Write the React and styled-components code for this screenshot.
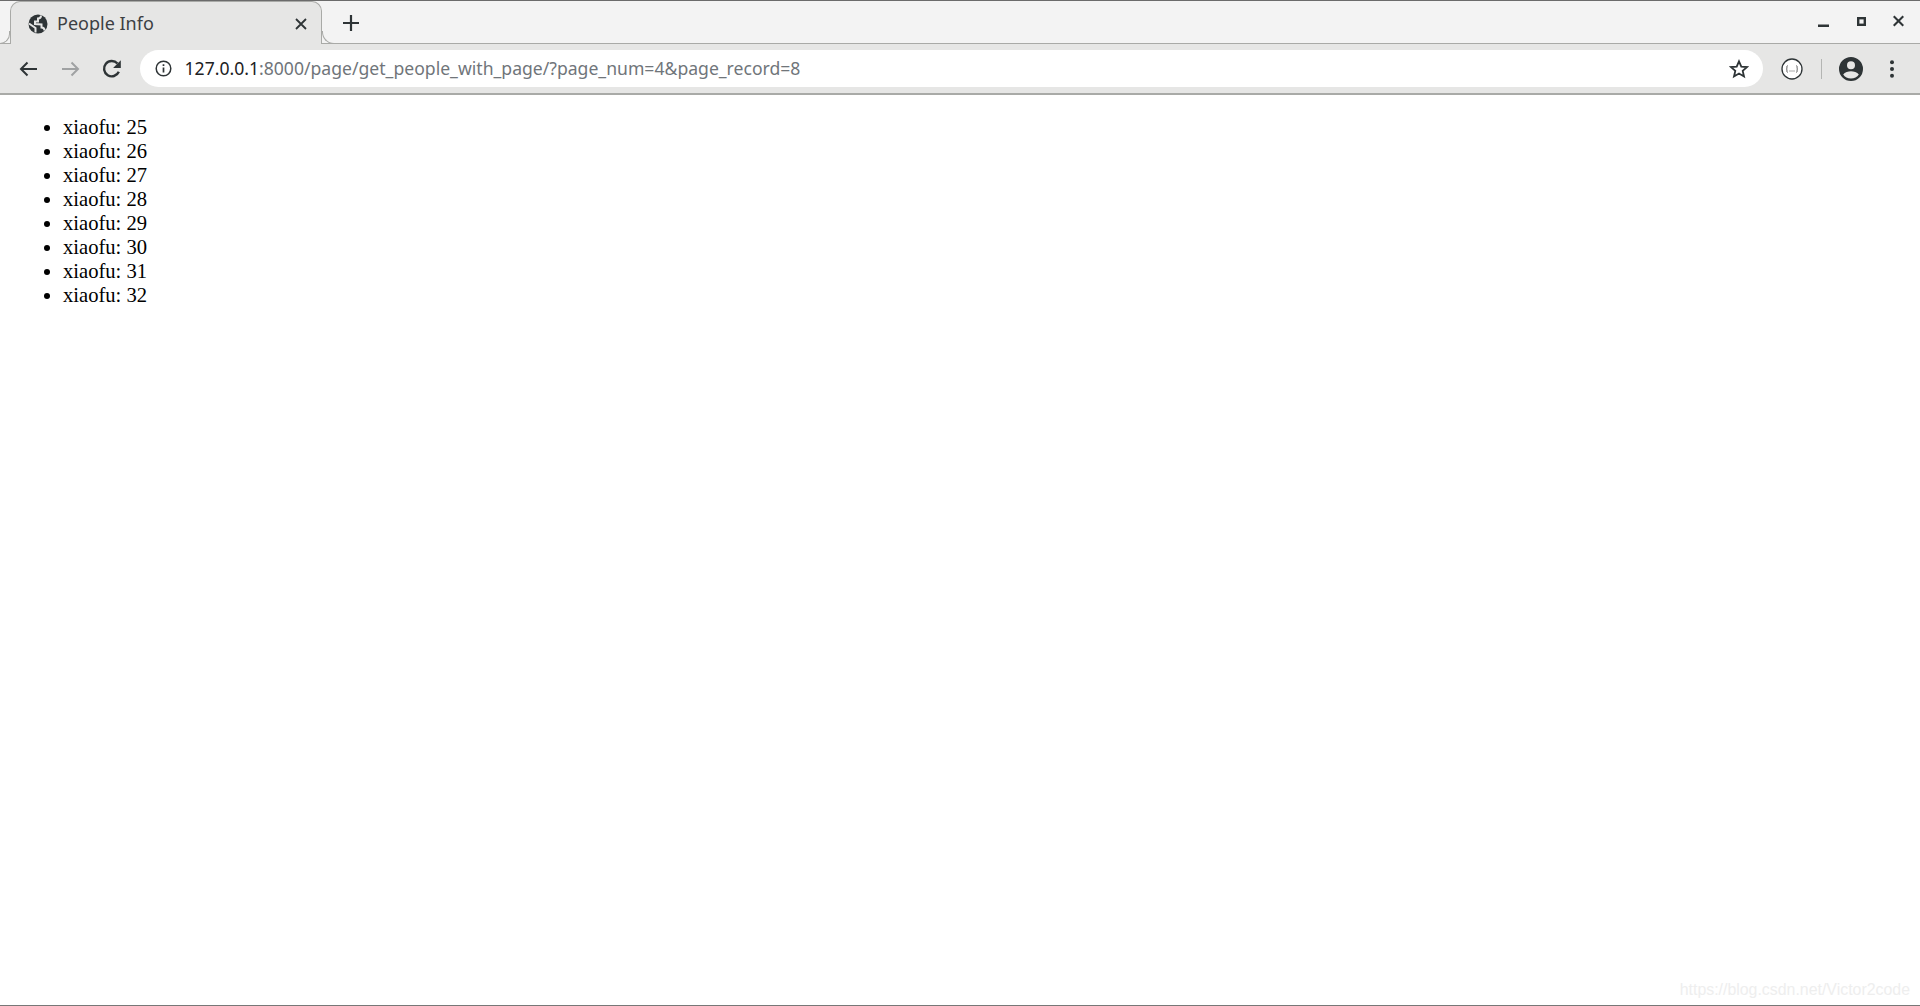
import React from "react";
import styled, { createGlobalStyle } from "styled-components";

const Global = createGlobalStyle`
  html, body { margin: 0; padding: 0; height: 100%; background: #fff; overflow: hidden; }
  #root { height: 100%; }
`;
const Window = styled.div`
  height: 1006px; display: flex; flex-direction: column; background: #fff;
  border-bottom: 1px solid #777; box-sizing: border-box; padding-bottom: 1px;
`;
const TabStrip = styled.div`
  height: 44px; flex: none; box-sizing: border-box; display: flex; align-items: flex-end;
  background: #f3f3f3; border-top: 1px solid #6b6b6b; border-bottom: 1px solid #a9aaa7;
  padding-left: 10px; color: #2e3436;
`;
const Tab = styled.div`
  position: relative; width: 312px; height: 43px; margin-bottom: -1px; box-sizing: border-box;
  display: flex; align-items: center; padding: 2px 13px 0 17px; gap: 9px;
  background: #e6e6e5; border: 1px solid #a9aaa7; border-bottom: none; border-radius: 10px 10px 0 0;
  &::before, &::after {
    content: ""; position: absolute; bottom: 0; height: 13px; box-sizing: border-box;
  }
  &::before { left: -11px; width: 10px; border-bottom: 1px solid #a9aaa7; border-right: 1px solid #a9aaa7; border-radius: 0 0 10px 0; }
  &::after { right: -14px; width: 13px; border-bottom: 1px solid #a9aaa7; border-left: 1px solid #a9aaa7; border-radius: 0 0 0 12px; }
`;
const TabTitle = styled.span`
  flex: 1; font: 18px "Noto Sans", sans-serif; color: #3c4043; position: relative; top: -1px;
`;
const NewTab = styled.div`
  margin: 0 0 0 21px; height: 43px; display: flex; align-items: center; padding-top: 3px; box-sizing: border-box;
`;
const WindowControls = styled.div`
  margin-left: auto; height: 43px; display: flex; align-items: center; gap: 27.5px; padding: 1px 16px 0 0; box-sizing: border-box;
`;
const Toolbar = styled.div`
  height: 51px; flex: none; box-sizing: border-box; display: flex; align-items: center;
  background: #e6e6e5; border-bottom: 2px solid #a9aaa7;
`;
const NavIcons = styled.div`
  width: 140px; flex: none; display: flex; align-items: center; padding-left: 15px; box-sizing: border-box; gap: 17px;
`;
const Omnibox = styled.div`
  flex: none; width: 1623px; height: 37px; border-radius: 19px; background: #fff; box-sizing: border-box;
  display: flex; align-items: center; padding: 0 14px 0 15px;
`;
const Url = styled.div`
  flex: 1; margin-left: 12.5px; padding-bottom: 1px; font: 17.6px "Noto Sans", sans-serif; color: #70757a; white-space: nowrap;
  b { font-weight: 400; color: #202124; }
`;
const RightIcons = styled.div`
  flex: 1; display: flex; align-items: center; padding-left: 18px;
`;
const Divider = styled.div`
  width: 1px; height: 20px; background: #b4b5b3; margin: 0 17px 0 18px;
`;
const Menu = styled.div`
  margin-left: 26px; display: flex; padding-top: 1px;
`;
const Page = styled.main`
  flex: 1; position: relative; background: #fff;
`;
const List = styled.ul`
  margin: 20px 0 0; padding: 0 0 0 63px; font: 20.6px/24px "Liberation Serif", serif; color: #000;
`;
const Watermark = styled.div`
  position: absolute; right: 10px; bottom: 5px; font: 15.9px "Liberation Sans", sans-serif; color: #eeeeee;
`;

const Globe = () => (
  <svg width="20" height="20" viewBox="0 0 20 20">
    <circle cx="10" cy="10" r="9.500" fill="#2e3436" />
    <path d="M1 9.500 7.500 14v4.500M16.500 16.500c0-2-1.500-3-3-3v-3l-6.500-.5V7.500h3V4.500c2 0 3-1 3-3" fill="none" stroke="#e6e6e5" strokeWidth="2" />
  </svg>
);
const Close = () => (
  <svg width="14" height="14" viewBox="0 0 14 14"><path d="M2 2l10 10M12 2L2 12" stroke="#2e3436" strokeWidth="1.800" /></svg>
);
const Plus = () => (
  <svg width="16" height="16" viewBox="0 0 16 16"><path d="M8 0v16M0 8h16" stroke="#2e3436" strokeWidth="2.200" /></svg>
);
const Minimize = () => (
  <svg width="11" height="16" viewBox="0 0 11 16"><rect x="0" y="10.500" width="11" height="2.500" fill="#2e3436" /></svg>
);
const Maximize = () => (
  <svg width="9" height="16" viewBox="0 0 9 16"><rect x="1.200" y="4.200" width="6.600" height="6.600" fill="none" stroke="#2e3436" strokeWidth="2.400" /></svg>
);
const WinClose = () => (
  <svg width="11" height="16" viewBox="0 0 11 16"><path d="M.7 2.200l9.600 9.600M10.300 2.200L.7 11.800" stroke="#2e3436" strokeWidth="2.200" /></svg>
);
const Arrow = ({ color, flip }) => (
  <svg width="26" height="26" viewBox="0 0 26 26" style={flip ? { transform: "scaleX(-1)" } : undefined}>
    <path d="M22 13H6M12.500 6.500 6 13l6.500 6.500" fill="none" stroke={color} strokeWidth="2" />
  </svg>
);
const Reload = () => (
  <svg width="22" height="22" viewBox="0 0 20 20">
    <path d="M16.200 12.500A7 7 0 1 1 15 5" fill="none" stroke="#2e3436" strokeWidth="2.200" />
    <path d="M18 2v7h-7z" fill="#2e3436" />
  </svg>
);
const Info = () => (
  <svg width="17" height="17" viewBox="0 0 17 17">
    <circle cx="8.500" cy="8.500" r="7.300" fill="none" stroke="#2e3436" strokeWidth="1.500" />
    <path d="M8.500 7.500v5M8.500 4.300v1.700" stroke="#2e3436" strokeWidth="1.700" />
  </svg>
);
const Star = () => (
  <svg width="20" height="20" viewBox="0 0 20 20">
    <path d="M10 2.300l2.300 5.300 5.700.5-4.300 3.800 1.300 5.600L10 14.500l-5 3 1.300-5.600L2 8.100l5.700-.5z" fill="none" stroke="#2e3436" strokeWidth="1.800" />
  </svg>
);
const Extension = () => (
  <svg width="22" height="22" viewBox="0 0 22 22">
    <circle cx="11" cy="11" r="10" fill="#fff" stroke="#2e3436" strokeWidth="1.300" />
    <path d="M6.500 7.500C5.500 8 6.300 10.500 5.500 11c.8.500 0 3 1 3.500M15.500 7.500c1 .5.200 3 1 3.500-.8.500 0 3-1 3.500" fill="none" stroke="#555" strokeWidth="1" />
    <path d="M8.500 13h1M10.500 13h1M12.500 13h1" stroke="#555" strokeWidth="1" />
  </svg>
);
const Account = () => (
  <svg width="24" height="24" viewBox="0 0 24 24">
    <path fill="#2e3436" fillRule="evenodd" d="M12 0a12 12 0 1 0 0 24 12 12 0 0 0 0-24zm0 4.200a4 4 0 1 1 0 8 4 4 0 0 1 0-8zM12 21.500c-3.300 0-6.200-1.600-7.800-4.100 1.500-2 5.200-3.100 7.800-3.100s6.300 1.100 7.800 3.100c-1.600 2.500-4.500 4.100-7.800 4.100z" />
  </svg>
);
const Dots = () => (
  <svg width="6" height="18" viewBox="0 0 6 18">
    <circle cx="3" cy="2.300" r="2" fill="#2e3436" /><circle cx="3" cy="9" r="2" fill="#2e3436" /><circle cx="3" cy="15.700" r="2" fill="#2e3436" />
  </svg>
);

const numbers = [25, 26, 27, 28, 29, 30, 31, 32];

export default function App() {
  return (
    <Window>
      <Global />
      <TabStrip>
        <Tab>
          <Globe />
          <TabTitle>People Info</TabTitle>
          <Close />
        </Tab>
        <NewTab><Plus /></NewTab>
        <WindowControls>
          <Minimize />
          <Maximize />
          <WinClose />
        </WindowControls>
      </TabStrip>
      <Toolbar>
        <NavIcons>
          <Arrow color="#2e3436" />
          <Arrow color="#a0a2a3" flip />
          <Reload />
        </NavIcons>
        <Omnibox>
          <Info />
          <Url><b>127.0.0.1</b>:8000/page/get_people_with_page/?page_num=4&amp;page_record=8</Url>
          <Star />
        </Omnibox>
        <RightIcons>
          <Extension />
          <Divider />
          <Account />
          <Menu><Dots /></Menu>
        </RightIcons>
      </Toolbar>
      <Page>
        <List>
          {numbers.map((n) => <li key={n}>xiaofu: {n}</li>)}
        </List>
        <Watermark>https://blog.csdn.net/Victor2code</Watermark>
      </Page>
    </Window>
  );
}
